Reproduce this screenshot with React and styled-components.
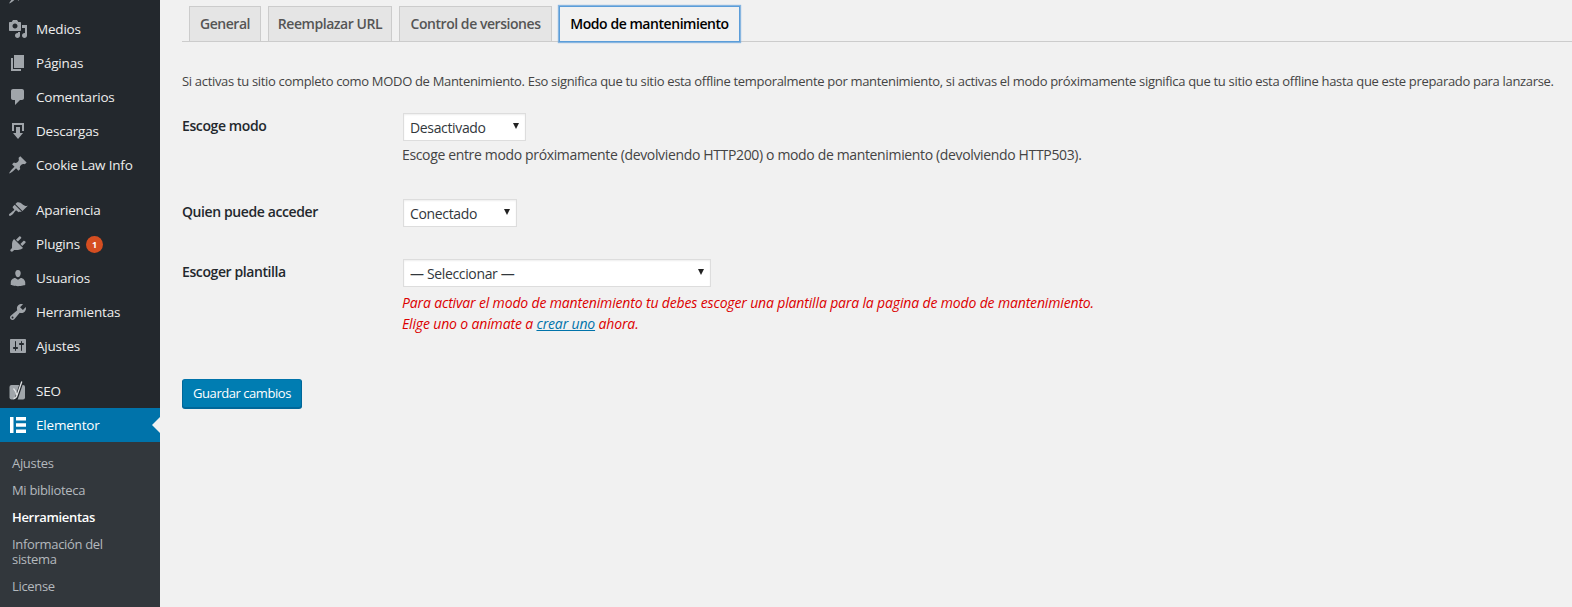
import styled, { createGlobalStyle } from "styled-components";

const GlobalStyle = createGlobalStyle`
  html, body {
    margin: 0;
    height: 100%;
    overflow: hidden;
    background: #f1f1f1;
  }
  #root {
    height: 100%;
  }
`;

const icons = {
  pin: "M10.44 3.02l1.82-1.82 6.36 6.35-1.83 1.82c-1.05-.68-2.48-.57-3.41.36l-.75.75c-.92.93-1.04 2.35-.35 3.41l-1.83 1.82-2.41-2.41-2.8 2.79c-.42.42-3.38 2.71-3.8 2.29s1.86-3.39 2.28-3.81l2.79-2.79L4.1 9.36l1.83-1.82c1.05.69 2.48.57 3.4-.36l.75-.75c.93-.92 1.05-2.35.36-3.41z",
  media: "M13 11V4c0-.55-.45-1-1-1h-1.67L9 1H5L3.67 3H2c-.55 0-1 .45-1 1v7c0 .55.45 1 1 1h10c.55 0 1-.45 1-1zM7 4.5c1.38 0 2.5 1.12 2.5 2.5S8.38 9.5 7 9.5 4.5 8.38 4.5 7 5.62 4.5 7 4.5zM14 6h5v10.5c0 1.38-1.12 2.5-2.5 2.5S14 17.88 14 16.5s1.12-2.5 2.5-2.5c.17 0 .34.02.5.05V9h-3V6zm-4 8.05V13h2v3.5c0 1.38-1.12 2.5-2.5 2.5S7 17.88 7 16.5 8.12 14 9.5 14c.17 0 .34.02.5.05z",
  page: "M6 15V2h10v13H6zm-1 1h8v2H3V5h2v11z",
  comments: "M5 2h9c1.1 0 2 .9 2 2v7c0 1.1-.9 2-2 2h-2l-5 5v-5H5c-1.1 0-2-.9-2-2V4c0-1.1.9-2 2-2z",
  download: "M14.01 4v6h2V2H4v8h2.01V4h8zm-2 2v6h3l-5 6-5-6h3V6h4z",
  brush: "M14.48 11.06L7.41 3.99l1.5-1.5c.5-.56 2.3-.47 3.51.32 1.21.8 1.43 1.28 2.91 2.1 1.18.64 2.45 1.26 4.45.85zm-.71.71L6.7 4.7 4.93 6.47c-.39.39-.39 1.02 0 1.41l1.06 1.06c.39.39.39 1.03 0 1.42-.6.6-1.43 1.11-2.21 1.69-.35.26-.7.53-1.01.84C1.43 13.23.4 14.8 1.2 15.6c.8.8 2.38-.23 3.72-1.57.31-.31.58-.66.85-1.01.58-.78 1.09-1.61 1.69-2.21.39-.39 1.02-.39 1.41 0l1.06 1.06c.39.39 1.02.39 1.41 0z",
  plug: "M13.11 4.36L9.87 7.6 8 5.73l3.24-3.24c.35-.34 1.05-.2 1.56.32.52.51.66 1.21.31 1.55zm-8 1.77l.91-1.12 9.01 9.01-1.19.84c-.71.71-2.63 1.16-3.82 1.16H6.14L4.9 17.26c-.59.59-1.54.59-2.12 0-.59-.58-.59-1.53 0-2.12l1.24-1.24v-3.88c0-1.13.4-3.19 1.09-3.89zm7.26 3.97l3.24-3.24c.34-.35 1.04-.21 1.55.31.52.51.66 1.21.31 1.55l-3.24 3.25z",
  users: "M10 9.25c-2.27 0-2.73-3.44-2.73-3.44C7 4.02 7.82 2 9.97 2c2.16 0 2.98 2.02 2.71 3.81 0 0-.41 3.44-2.68 3.44zm0 2.57L12.72 10c2.39 0 4.52 2.33 4.52 4.53v2.49s-3.65 1.13-7.24 1.13c-3.65 0-7.24-1.13-7.24-1.13v-2.49c0-2.25 1.94-4.48 4.47-4.48z",
  tools: "M16.68 9.77c-1.34 1.34-3.3 1.67-4.95.99l-5.41 6.52c-.99.99-2.59.99-3.58 0s-.99-2.59 0-3.57l6.52-5.42c-.68-1.65-.35-3.61.99-4.95 1.28-1.28 3.12-1.62 4.72-1.06l-2.89 2.89 2.82 2.82 2.86-2.87c.53 1.58.18 3.39-1.08 4.65zM3.81 16.21c.4.39 1.04.39 1.43 0 .4-.4.4-1.04 0-1.43-.39-.4-1.03-.4-1.43 0-.39.39-.39 1.03 0 1.43z",
  settings: "M18 16V4c0-.55-.45-1-1-1H3c-.55 0-1 .45-1 1v12c0 .55.45 1 1 1h14c.55 0 1-.45 1-1zM8 11h1c.55 0 1 .45 1 1s-.45 1-1 1H8v1.5c0 .28-.22.5-.5.5s-.5-.22-.5-.5V13H6c-.55 0-1-.45-1-1s.45-1 1-1h1V5.5c0-.28.22-.5.5-.5s.5.22.5.5V11zm5-2h-1c-.55 0-1-.45-1-1s.45-1 1-1h1V5.5c0-.28.22-.5.5-.5s.5.22.5.5V7h1c.55 0 1 .45 1 1s-.45 1-1 1h-1v5.5c0 .28-.22.5-.5.5s-.5-.22-.5-.5V9z",
};

const menuGroups = [
  [
    // the row above Medios is scrolled away, only its icon tip shows
    { label: "", icon: "pin" },
    { label: "Medios", icon: "media" },
    { label: "Páginas", icon: "page" },
    { label: "Comentarios", icon: "comments" },
    { label: "Descargas", icon: "download" },
    { label: "Cookie Law Info", icon: "pin" },
  ],
  [
    { label: "Apariencia", icon: "brush" },
    { label: "Plugins", icon: "plug", badge: 1 },
    { label: "Usuarios", icon: "users" },
    { label: "Herramientas", icon: "tools" },
    { label: "Ajustes", icon: "settings" },
  ],
];

const subItems = [
  { label: "Ajustes" },
  { label: "Mi biblioteca" },
  { label: "Herramientas", current: true },
  { label: "Información del sistema" },
  { label: "License" },
];

const tabs = [
  { label: "General", width: 72 },
  { label: "Reemplazar URL", width: 124 },
  { label: "Control de versiones", width: 153 },
  { label: "Modo de mantenimiento", width: 181, active: true },
];

const Icon = ({ name }) => (
  <IconSvg viewBox="0 0 20 20">
    <path d={icons[name]} />
  </IconSvg>
);

const App = () => {
  return (
    <>
      <GlobalStyle />
      <Page>
        <Sidebar>
          <Menu>
            {menuGroups.map((group, i) => (
              <MenuGroup key={i}>
                {group.map((item) => (
                  <MenuItem key={item.label}>
                    <Icon name={item.icon} />
                    {item.label}
                    {item.badge && <Badge>{item.badge}</Badge>}
                  </MenuItem>
                ))}
              </MenuGroup>
            ))}
            <MenuGroup>
              <MenuItem>
                <YoastIcon viewBox="0 0 20 20">
                  <rect x="1.500" y="4" width="15.500" height="14.500" rx="2" fill="#a0a5aa" />
                  <path d="M14.500 -1L7.500 20" stroke="#23282d" strokeWidth="3.200" fill="none" />
                  <path d="M5.500 7.500C7 9 8 11 9 14.500M13.800 0.500L9 14.500C8.300 16.500 7 17.500 5.500 17.500" stroke="#e2e4e6" strokeWidth="1.300" fill="none" />
                </YoastIcon>
                SEO
              </MenuItem>
              <ActiveItem>
                <ElementorIcon viewBox="0 0 20 20">
                  <path d="M2 2h3.500v16H2zM8 2h10v3.500H8zM8 8.200h10v3.500H8zM8 14.500h10V18H8z" />
                </ElementorIcon>
                Elementor
              </ActiveItem>
            </MenuGroup>
            <SubMenu>
              {subItems.map((item) => (
                <SubItem key={item.label} $current={item.current}>
                  {item.label}
                </SubItem>
              ))}
            </SubMenu>
          </Menu>
        </Sidebar>

        <Main>
          <Tabs>
            {tabs.map((tab) => (
              <Tab key={tab.label} $width={tab.width} $active={tab.active}>
                {tab.label}
              </Tab>
            ))}
          </Tabs>

          <Intro>
            Si activas tu sitio completo como MODO de Mantenimiento. Eso
            significa que tu sitio esta offline temporalmente por mantenimiento,
            si activas el modo próximamente significa que tu sitio esta offline
            hasta que este preparado para lanzarse.
          </Intro>

          <FormRow $height={86}>
            <Label>Escoge modo</Label>
            <Field>
              <SelectBox $width={123}>
                <Select defaultValue="off">
                  <option value="off">Desactivado</option>
                </Select>
                <Arrow />
              </SelectBox>
              <Description>
                Escoge entre modo próximamente (devolviendo HTTP200) o modo de
                mantenimiento (devolviendo HTTP503).
              </Description>
            </Field>
          </FormRow>

          <FormRow $height={60}>
            <Label>Quien puede acceder</Label>
            <Field>
              <SelectBox $width={114}>
                <Select defaultValue="in">
                  <option value="in">Conectado</option>
                </Select>
                <Arrow />
              </SelectBox>
            </Field>
          </FormRow>

          <FormRow $height={132}>
            <Label>Escoger plantilla</Label>
            <Field>
              <SelectBox $width={308}>
                <Select defaultValue="none">
                  <option value="none">— Seleccionar —</option>
                </Select>
                <Arrow />
              </SelectBox>
              <ErrorText>
                Para activar el modo de mantenimiento tu debes escoger una
                plantilla para la pagina de modo de mantenimiento.
                <br />
                Elige uno o anímate a <ErrorLink href="#">crear uno</ErrorLink>{" "}
                ahora.
              </ErrorText>
            </Field>
          </FormRow>

          <SaveButton type="button">Guardar cambios</SaveButton>
        </Main>
      </Page>
    </>
  );
};

const Page = styled.div`
  display: flex;
  height: 100%;
  font-family: "Open Sans", "Noto Sans", sans-serif;
  font-size: 13px;
  letter-spacing: -0.32px;
  color: #444;
`;

const Sidebar = styled.aside`
  flex: 0 0 160px;
  height: 100%;
  background: #23282d;
  overflow: hidden;
`;

const Menu = styled.div`
  margin-top: -22px;
`;

const MenuGroup = styled.div`
  & + & {
    margin-top: 11px;
  }
`;

const MenuItem = styled.div`
  display: flex;
  align-items: center;
  height: 34px;
  padding-left: 8px;
  box-sizing: border-box;
  color: #eee;
  font-size: 13.5px;
  letter-spacing: -0.2px;
  white-space: nowrap;
`;

const ActiveItem = styled(MenuItem)`
  position: relative;
  background: #0073aa;
  color: #fff;

  &::after {
    content: "";
    position: absolute;
    right: 0;
    top: 9px;
    border: 8px solid transparent;
    border-right-color: #f1f1f1;
    border-left-width: 0;
  }
`;

const IconSvg = styled.svg`
  flex: 0 0 20px;
  width: 20px;
  height: 20px;
  margin-right: 8px;
  fill: #a0a5aa;
`;

const YoastIcon = styled(IconSvg)`
  overflow: visible;
`;

const ElementorIcon = styled(IconSvg)`
  fill: #fff;
`;

const Badge = styled.span`
  display: inline-flex;
  align-items: center;
  justify-content: center;
  width: 17px;
  height: 17px;
  margin-left: 6px;
  border-radius: 50%;
  background: #d54e21;
  color: #fff;
  font-size: 9px;
  font-weight: 700;
`;

const SubMenu = styled.div`
  background: #32373c;
  padding: 8px 0 40px;
`;

const SubItem = styled.div`
  padding: 6px 12px;
  width: 110px;
  line-height: 15px;
  color: ${(p) => (p.$current ? "#fff" : "#b4b9be")};
  font-weight: ${(p) => (p.$current ? 600 : 400)};
`;

const Main = styled.main`
  flex: 1;
  min-width: 0;
  padding: 0 0 0 22px;
`;

const Tabs = styled.nav`
  display: flex;
  gap: 7px;
  height: 42px;
  padding: 6px 0 0 7px;
  box-sizing: border-box;
  border-bottom: 1px solid #ccc;
`;

const Tab = styled.div`
  width: ${(p) => p.$width}px;
  height: 36px;
  box-sizing: border-box;
  border: 1px solid ${(p) => (p.$active ? "#5b9dd9" : "#ccc")};
  background: ${(p) => (p.$active ? "#f1f1f1" : "#e5e5e5")};
  box-shadow: ${(p) => (p.$active ? "0 0 1px 1px rgba(91, 157, 217, 0.7)" : "none")};
  color: ${(p) => (p.$active ? "#000" : "#555")};
  font-size: 14px;
  font-weight: 600;
  letter-spacing: -0.45px;
  line-height: 34px;
  text-align: center;
  white-space: nowrap;
`;

const Intro = styled.p`
  margin: 29px 0 10px;
  line-height: 20px;
  white-space: nowrap;
`;

const FormRow = styled.div`
  display: grid;
  grid-template-columns: 221px 1fr;
  height: ${(p) => p.$height}px;
`;

const Label = styled.div`
  padding-top: 15px;
  font-size: 14px;
  font-weight: 600;
  letter-spacing: -0.4px;
  line-height: 20px;
  color: #23282d;
`;

const Field = styled.div`
  padding-top: 12px;
`;

const SelectBox = styled.div`
  position: relative;
  width: ${(p) => p.$width}px;
  height: 28px;
`;

const Select = styled.select`
  appearance: none;
  display: block;
  width: 100%;
  height: 100%;
  padding: 0 6px;
  border: 1px solid #ddd;
  border-radius: 0;
  background: #fff;
  box-shadow: inset 0 1px 2px rgba(0, 0, 0, 0.07);
  color: #32373c;
  font-family: inherit;
  font-size: 14px;
  letter-spacing: -0.35px;
`;

const Arrow = styled.span`
  position: absolute;
  right: 7px;
  top: 10px;
  border-top: 6px solid #222;
  border-left: 3px solid transparent;
  border-right: 3px solid transparent;
`;

const Description = styled.p`
  margin: 4px 0 0 -1px;
  line-height: 20px;
  font-size: 14px;
  letter-spacing: -0.35px;
  color: #444;
  white-space: nowrap;
`;

const ErrorText = styled.p`
  margin: 5px 0 0 -1px;
  line-height: 21px;
  font-size: 14px;
  font-style: italic;
  letter-spacing: -0.15px;
  color: #dc0000;
  white-space: nowrap;
`;

const ErrorLink = styled.a`
  color: #0073aa;
  text-decoration: underline;
`;

const SaveButton = styled.button`
  display: block;
  height: 29px;
  width: 120px;
  padding: 0 0 1px;
  border: 1px solid #006799;
  border-color: #0073aa #006799 #006799;
  border-radius: 3px;
  background: #007db2;
  box-shadow: 0 1px 0 #006799;
  color: #fff;
  font-family: inherit;
  font-size: 13px;
  letter-spacing: -0.45px;
  white-space: nowrap;
`;

export default App;
